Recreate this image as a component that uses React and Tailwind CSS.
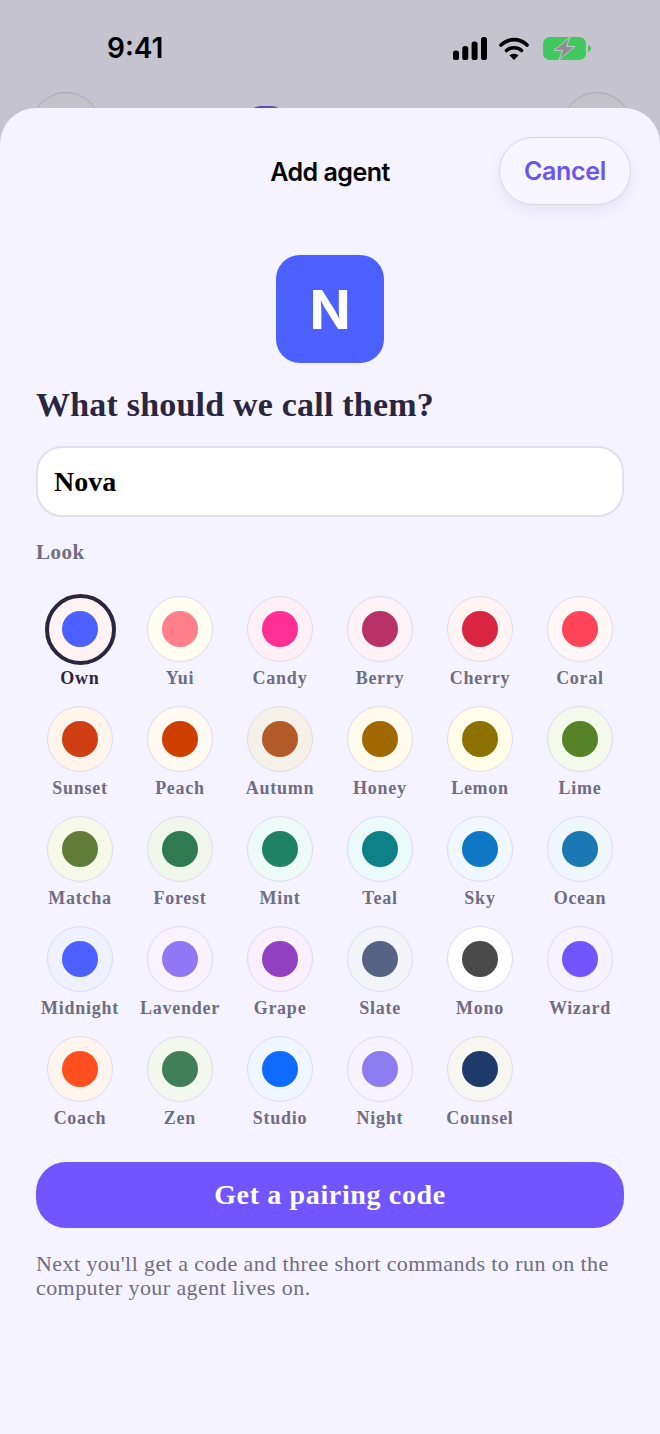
import React from "react";

const LOOKS = [
  { name: "Own", bg: "bg-[#fff3f3]", dot: "bg-[#4c5fff]", selected: true },
  { name: "Yui", bg: "bg-[#fffcf2]", dot: "bg-[#ff7f8a]" },
  { name: "Candy", bg: "bg-[#fff0f8]", dot: "bg-[#ff2f93]" },
  { name: "Berry", bg: "bg-[#fdf3f7]", dot: "bg-[#b83268]" },
  { name: "Cherry", bg: "bg-[#fff3f3]", dot: "bg-[#d9253f]" },
  { name: "Coral", bg: "bg-[#fff7f6]", dot: "bg-[#ff4358]" },
  { name: "Sunset", bg: "bg-[#fff5ec]", dot: "bg-[#cf3e12]" },
  { name: "Peach", bg: "bg-[#fff9f2]", dot: "bg-[#cf4000]" },
  { name: "Autumn", bg: "bg-[#f6f1e8]", dot: "bg-[#b25a28]" },
  { name: "Honey", bg: "bg-[#fffaeb]", dot: "bg-[#a06800]" },
  { name: "Lemon", bg: "bg-[#fffde8]", dot: "bg-[#8c7000]" },
  { name: "Lime", bg: "bg-[#f3faeb]", dot: "bg-[#568228]" },
  { name: "Matcha", bg: "bg-[#f6f9ea]", dot: "bg-[#617c38]" },
  { name: "Forest", bg: "bg-[#f1f6ec]", dot: "bg-[#2f7a50]" },
  { name: "Mint", bg: "bg-[#eefaf6]", dot: "bg-[#1f8262]" },
  { name: "Teal", bg: "bg-[#ebfbfb]", dot: "bg-[#0d8088]" },
  { name: "Sky", bg: "bg-[#f0f7fe]", dot: "bg-[#1077c5]" },
  { name: "Ocean", bg: "bg-[#f0f7fc]", dot: "bg-[#1c78b4]" },
  { name: "Midnight", bg: "bg-[#eff2fe]", dot: "bg-[#4c5fff]" },
  { name: "Lavender", bg: "bg-[#f8f3ff]", dot: "bg-[#9078f5]" },
  { name: "Grape", bg: "bg-[#f9f0fc]", dot: "bg-[#9040c0]" },
  { name: "Slate", bg: "bg-[#f3f4f8]", dot: "bg-[#566384]" },
  { name: "Mono", bg: "bg-white", dot: "bg-[#4a4a4a]" },
  { name: "Wizard", bg: "bg-[#f6f2ff]", dot: "bg-[#7155ff]" },
  { name: "Coach", bg: "bg-[#fff5ee]", dot: "bg-[#ff4f20]" },
  { name: "Zen", bg: "bg-[#f3f8ef]", dot: "bg-[#417f58]" },
  { name: "Studio", bg: "bg-[#f0f6ff]", dot: "bg-[#0f6bff]" },
  { name: "Night", bg: "bg-[#f6f3ff]", dot: "bg-[#8d7cf0]" },
  { name: "Counsel", bg: "bg-[#f8f6f0]", dot: "bg-[#1e3a6b]" },
];

function StatusIcons() {
  return (
    <div className="flex items-center">
      <svg width="34" height="23" viewBox="0 0 34 23" fill="#000">
        <rect x="0" y="13.500" width="6" height="9.500" rx="2.600" />
        <rect x="9.300" y="9" width="6" height="14" rx="2.600" />
        <rect x="18.600" y="4.500" width="6" height="18.500" rx="2.600" />
        <rect x="28" y="0" width="6" height="23" rx="2.600" />
      </svg>
      <svg className="ml-[12px]" width="30" height="23" viewBox="0 0 30 23" fill="none" stroke="#000" strokeWidth="3.600" strokeLinecap="round">
        <path d="M2 8C9.500 .800 20.500 .800 28 8" />
        <path d="M7.500 13.500C11.500 9.800 18.500 9.800 22.500 13.500" />
        <path d="M15 23l-4.600-4.700c2.500-2.100 6.700-2.100 9.200 0z" fill="#000" stroke="none" />
      </svg>
      <svg className="ml-[14px]" width="48" height="23" viewBox="0 0 48 23">
        <rect x="0" y="0" width="43" height="23" rx="6.500" fill="#3fc95f" />
        <path d="M45 8c1.800.5 3 2 3 3.500S46.800 14.500 45 15z" fill="#3fc95f" />
        <path d="M27 0L11 13.500h8.500L16 23 32 9.500h-8.500z" fill="#8e8e93" stroke="#c5c3cd" strokeWidth="1" />
      </svg>
    </div>
  );
}

function LookItem({ look }) {
  return (
    <div className="flex flex-col items-center h-[110px]">
      <div className={`relative w-[66px] h-[66px] mt-[1px] rounded-full flex items-center justify-center border-[1.5px] ${look.bg} ${look.selected ? "border-transparent" : "border-[#dfdbed]"}`}>
        {look.selected && (
          <div className="absolute -inset-[3.5px] rounded-full border-[4.5px] border-[#2a2640]" />
        )}
        <div className={`w-[36px] h-[36px] rounded-full ${look.dot}`} />
      </div>
      <span className={`mt-[5px] text-[18px] leading-[22px] font-bold tracking-[0.75px] whitespace-nowrap ${look.selected ? "text-[#2a2640]" : "text-[#6f6d82]"}`}>
        {look.name}
      </span>
    </div>
  );
}

export default function App() {
  const serif = "font-['Liberation_Serif',serif]";
  return (
    <div className="w-[660px] h-[1434px] bg-[#c5c3cd] overflow-hidden flex flex-col font-['Inter',sans-serif]">
      <div className="relative h-[108px] shrink-0 overflow-hidden">
        <div className="flex items-center justify-between pl-[107px] pr-[69px] pt-[30px]">
          <span className="text-[28px] leading-[36px] font-semibold text-black">9:41</span>
          <StatusIcons />
        </div>
        <div className="absolute left-[31px] top-[92px] w-[70px] h-[70px] rounded-full bg-[#c3c1ca] border border-[#a9a7b2]" />
        <div className="absolute left-[247px] top-[106px] w-[38px] h-[38px] rounded-[14px] bg-[#5648c8]" />
        <div className="absolute left-[562px] top-[92px] w-[70px] h-[70px] rounded-full bg-[#c3c1ca] border border-[#a9a7b2]" />
      </div>

      <div className="flex-1 bg-[#f5f3ff] rounded-t-[36px] px-[36px]">
        <div className="relative h-[147px] pt-[31px]">
          <div className="h-[68px] flex items-center justify-center text-[25px] font-semibold text-black tracking-[-0.5px]">
            Add agent
          </div>
          <button className="absolute right-[-7px] top-[29px] w-[132px] h-[68px] pt-[2px] rounded-[34px] bg-[#f7f5ff] border border-[#d8d6e2] shadow-[0_6px_14px_rgba(60,50,120,0.07)] text-[25px] font-semibold text-[#6b55ee] tracking-[-0.3px]">
            Cancel
          </button>
        </div>

        <div className="flex justify-center">
          <div className="w-[108px] h-[108px] rounded-[24px] bg-[#4c5fff] flex items-center justify-center text-white text-[54px] font-bold">
            N
          </div>
        </div>

        <h1 className={`${serif} mt-[21px] text-[34px] leading-[42px] font-bold text-[#2a2640] tracking-[0.2px]`}>
          What should we call them?
        </h1>

        <div className={`${serif} mt-[20px] h-[71px] rounded-[26px] bg-white border-[2px] border-[#e1def0] pl-[16px] flex items-center text-[28px] font-bold text-black`}>
          Nova
        </div>

        <div className={`${serif} mt-[23px] text-[21px] leading-[24px] font-bold text-[#6f6d82] tracking-[0.5px]`}>
          Look
        </div>

        <div className={`${serif} mt-[31px] -mx-[6px] grid grid-cols-6`}>
          {LOOKS.map((look) => (
            <LookItem key={look.name} look={look} />
          ))}
        </div>

        <button className={`${serif} mt-[17px] w-full h-[66px] rounded-[30px] bg-[#7155ff] text-white text-[28px] font-bold tracking-[0.64px]`}>
          Get a pairing code
        </button>

        <p className={`${serif} mt-[24px] text-[22px] leading-[24px] text-[#6f6d82] tracking-[0.43px]`}>
          Next you'll get a code and three short commands to run on the computer your agent lives on.
        </p>
      </div>
    </div>
  );
}
